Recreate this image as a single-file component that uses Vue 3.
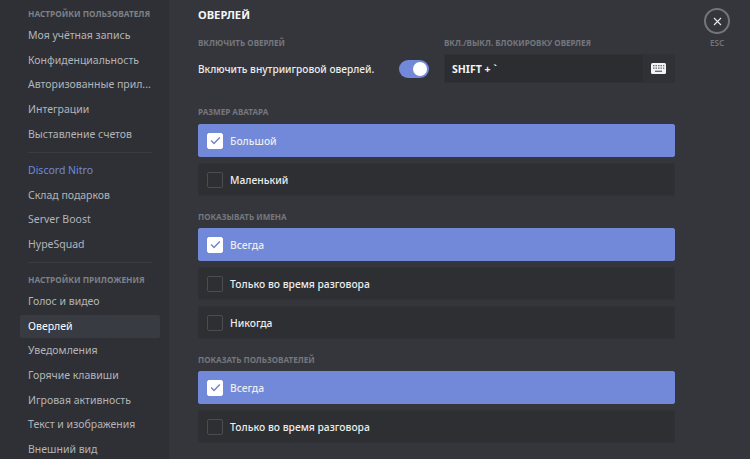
<script setup>
const groups = [
  { title: 'Настройки пользователя', items: ['Моя учётная запись', 'Конфиденциальность', 'Авторизованные прил...', 'Интеграции', 'Выставление счетов'] },
  { items: ['Discord Nitro', 'Склад подарков', 'Server Boost', 'HypeSquad'] },
  { title: 'Настройки приложения', items: ['Голос и видео', 'Оверлей', 'Уведомления', 'Горячие клавиши', 'Игровая активность', 'Текст и изображения', 'Внешний вид'] },
]
const sections = [
  { title: 'Размер аватара', options: [{ t: 'Большой', on: true }, { t: 'Маленький' }] },
  { title: 'Показывать имена', options: [{ t: 'Всегда', on: true }, { t: 'Только во время разговора' }, { t: 'Никогда' }] },
  { title: 'Показать пользователей', options: [{ t: 'Всегда', on: true }, { t: 'Только во время разговора' }] },
]
</script>

<template>
  <div class="page">
    <aside class="side">
      <section v-for="(g, i) in groups" :key="i" class="group">
        <h3 v-if="g.title" class="side-head">{{ g.title }}</h3>
        <div
          v-for="it in g.items"
          :key="it"
          class="side-item"
          :class="{ nitro: it === 'Discord Nitro', active: it === 'Оверлей' }"
        >{{ it }}</div>
      </section>
    </aside>

    <main class="main">
      <h2 class="title">Оверлей</h2>
      <div class="top">
        <div class="top-left">
          <div class="label">Включить оверлей</div>
          <div class="toggle-row">
            <span class="toggle-text">Включить внутриигровой оверлей.</span>
            <span class="toggle"><span class="knob"></span></span>
          </div>
        </div>
        <div class="top-right">
          <div class="label">Вкл./выкл. блокировку оверлея</div>
          <div class="keybind">
            <span class="keys">SHIFT + `</span>
            <span class="kbd-btn">
              <svg width="15" height="11" viewBox="0 0 15 11">
                <rect x="0" y="0" width="15" height="11" rx="1.5" fill="#f2f3f5" />
                <g fill="#6a6d73">
                  <rect x="2" y="2" width="1.5" height="1.3" />
                  <rect x="4.5" y="2" width="1.5" height="1.3" />
                  <rect x="7" y="2" width="1.5" height="1.3" />
                  <rect x="9.5" y="2" width="1.5" height="1.3" />
                  <rect x="12" y="2" width="1.3" height="1.3" />
                  <rect x="2" y="4.5" width="1.5" height="1.3" />
                  <rect x="4.5" y="4.5" width="1.5" height="1.3" />
                  <rect x="7" y="4.5" width="1.5" height="1.3" />
                  <rect x="9.5" y="4.5" width="1.5" height="1.3" />
                  <rect x="12" y="4.5" width="1.3" height="1.3" />
                  <rect x="4" y="7.6" width="7" height="1.4" />
                </g>
              </svg>
            </span>
          </div>
        </div>
      </div>

      <section v-for="s in sections" :key="s.title" class="sec">
        <div class="label sec-label">{{ s.title }}</div>
        <div v-for="o in s.options" :key="o.t" class="opt" :class="{ on: o.on }">
          <span class="box">
            <svg v-if="o.on" width="11" height="9" viewBox="0 0 11 9">
              <path d="M1.2 4.6 L4 7.4 L9.8 1.4" fill="none" stroke="#6f80c9" stroke-width="1.4" />
            </svg>
          </span>
          <span class="opt-text">{{ o.t }}</span>
        </div>
      </section>
    </main>

    <div class="tools">
      <span class="close">
        <svg width="9" height="9" viewBox="0 0 9 9">
          <path d="M1 1 L8 8 M8 1 L1 8" stroke="#e6e7e9" stroke-width="1.1" fill="none" />
        </svg>
      </span>
      <span class="esc">ESC</span>
    </div>
  </div>
</template>

<style scoped>
.page {
  display: flex;
  width: 750px;
  height: 459px;
  overflow: hidden;
  background: #34363c;
  font-family: "Noto Sans", "Open Sans", sans-serif;
  color: #fff;
}
.side {
  width: 169px;
  flex: none;
  box-sizing: border-box;
  padding: 6px 9px 0 20px;
  background: #2e3035;
}
.group + .group::before {
  content: "";
  display: block;
  height: 1px;
  margin: 6px 8px 6.5px;
  background: #3a3c42;
}
.group + .group .side-head {
  margin-top: 9px;
}
.side-head {
  margin: 0 0 3px;
  padding-left: 8px;
  height: 15px;
  line-height: 15px;
  font-size: 8.3px;
  font-weight: 700;
  text-transform: uppercase;
  color: #7d8086;
  white-space: nowrap;
}
.side-item {
  height: 23px;
  line-height: 23px;
  margin-bottom: 1.65px;
  padding-left: 8px;
  font-size: 10.5px;
  color: #b3b5b9;
  border-radius: 2px;
  white-space: nowrap;
}
.side-item.nitro { color: #7289da; }
.side-item.active { background: #393b42; color: #fff; }
.main {
  width: 477px;
  flex: none;
  margin-left: 29px;
  padding-top: 6px;
}
.title {
  margin: 0;
  height: 17px;
  line-height: 17px;
  font-size: 11.2px;
  font-weight: 700;
  text-transform: uppercase;
  color: #f4f5f6;
}
.label {
  height: 12px;
  line-height: 12px;
  font-size: 8.1px;
  font-weight: 700;
  text-transform: uppercase;
  color: #74777d;
  white-space: nowrap;
}
.top {
  display: flex;
  margin-top: 14px;
}
.top-left { width: 246px; flex: none; }
.top-right { flex: 1; }
.toggle-row {
  display: flex;
  align-items: center;
  justify-content: space-between;
  width: 231px;
  height: 29px;
  margin-top: 5px;
}
.toggle-text {
  font-size: 10.15px;
  font-weight: 500;
  color: #eceded;
  white-space: nowrap;
}
.toggle {
  width: 30px;
  height: 18px;
  border-radius: 9px;
  background: #7289da;
  display: flex;
  align-items: center;
  justify-content: flex-end;
  padding: 0 2px;
  box-sizing: border-box;
}
.knob {
  width: 14px;
  height: 14px;
  border-radius: 50%;
  background: #fff;
}
.keybind {
  display: flex;
  align-items: center;
  justify-content: space-between;
  height: 29px;
  margin-top: 5px;
  box-sizing: border-box;
  background: #2b2d31;
  border: 1px solid #2f3136;
  border-radius: 2px;
  padding-left: 7px;
}
.keys {
  font-size: 10.5px;
  font-weight: 700;
  color: #f2f3f4;
}
.kbd-btn {
  width: 31px;
  height: 27px;
  display: flex;
  align-items: center;
  justify-content: center;
  background: #2f3136;
}
.sec-label { margin-bottom: 5px; }
.top + .sec .sec-label { margin-bottom: 6px; }
.sec { margin-top: 15px; }
.top + .sec { margin-top: 23px; }
.opt {
  display: flex;
  align-items: center;
  height: 33px;
  box-sizing: border-box;
  padding-left: 8px;
  margin-bottom: 6px;
  background: #2d2f33;
  border: 1px solid #2f3136;
  border-radius: 2px;
}
.opt.on {
  background: #7289da;
  border-color: #7289da;
}
.box {
  width: 16px;
  height: 16px;
  flex: none;
  box-sizing: border-box;
  border: 1px solid #4a4c51;
  border-radius: 2px;
  display: flex;
  align-items: center;
  justify-content: center;
}
.on .box { background: #fff; border-color: #fff; }
.opt-text {
  margin-left: 7px;
  font-size: 10.3px;
  font-weight: 500;
  color: #eceded;
  white-space: nowrap;
}
.tools {
  flex: none;
  margin-left: 29px;
  padding-top: 8px;
  display: flex;
  flex-direction: column;
  align-items: center;
  width: 26px;
}
.close {
  width: 26px;
  height: 26px;
  box-sizing: border-box;
  border: 2px solid #72757b;
  border-radius: 50%;
  display: flex;
  align-items: center;
  justify-content: center;
}
.esc {
  margin-top: 3px;
  font-size: 8.1px;
  font-weight: 600;
  color: #72757b;
}
</style>
